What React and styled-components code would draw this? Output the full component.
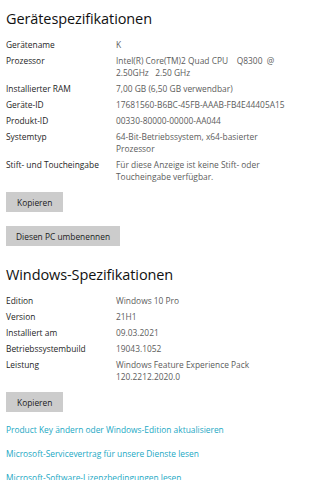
import React from "react";
import styled, { createGlobalStyle } from "styled-components";

const GlobalStyle = createGlobalStyle`
    html, body {
        margin: 0;
        padding: 0;
        background: #ffffff;
    }
    body {
        font-family: "Open Sans", "Noto Sans", sans-serif;
        color: #1b1b1b;
    }
`;

const Page = styled.div`
    width: 318px;
    height: 480px;
    overflow: hidden;
    padding: 0 6px;
    box-sizing: border-box;
`;

const Section = styled.section`
    display: flex;
    flex-direction: column;
    align-items: flex-start;
`;

const Title = styled.h2`
    margin: ${(p) => p.$top}px 0 0;
    font-size: 14.5px;
    font-weight: 400;
    line-height: 20px;
    letter-spacing: -0.1px;
    color: #111;
`;

const SpecGrid = styled.div`
    display: grid;
    grid-template-columns: 110px 1fr;
    row-gap: 4px;
    margin-top: 10px;
    width: 100%;
    font-size: 8.4px;
    line-height: 12px;
`;

const Label = styled.div`
    color: #1e1e1e;
    white-space: nowrap;
`;

const Value = styled.div`
    color: #5c5c5c;
    white-space: pre;
`;

const Button = styled.button`
    margin-top: ${(p) => p.$top}px;
    height: 20px;
    padding: 0 ${(p) => p.$pad || 11}px;
    border: none;
    background: #cccccc;
    color: #1b1b1b;
    font-family: inherit;
    font-size: 8.4px;
    cursor: pointer;
`;

const Links = styled.div`
    display: flex;
    flex-direction: column;
    gap: 12px;
    margin-top: 12px;
`;

const Link = styled.a`
    color: #22a8c4;
    font-size: 8.4px;
    line-height: 12px;
    text-decoration: none;
    white-space: nowrap;
`;

const device = [
    ["Gerätename", ["K"]],
    ["Prozessor", ["Intel(R) Core(TM)2 Quad CPU    Q8300  @", "2.50GHz   2.50 GHz"]],
    ["Installierter RAM", ["7,00 GB (6,50 GB verwendbar)"]],
    ["Geräte-ID", ["17681560-B6BC-45FB-AAAB-FB4E44405A15"]],
    ["Produkt-ID", ["00330-80000-00000-AA044"]],
    ["Systemtyp", ["64-Bit-Betriebssystem, x64-basierter", "Prozessor"]],
    ["Stift- und Toucheingabe", ["Für diese Anzeige ist keine Stift- oder", "Toucheingabe verfügbar."]],
];

const windows = [
    ["Edition", ["Windows 10 Pro"]],
    ["Version", ["21H1"]],
    ["Installiert am", ["09.03.2021"]],
    ["Betriebssystembuild", ["19043.1052"]],
    ["Leistung", ["Windows Feature Experience Pack", "120.2212.2020.0"]],
];

const Specs = ({ rows }) => (
    <SpecGrid>
        {rows.map(([label, lines]) => (
            <React.Fragment key={label}>
                <Label>{label}</Label>
                <Value>{lines.join("\n")}</Value>
            </React.Fragment>
        ))}
    </SpecGrid>
);

const App = () => {
    return (
        <Page>
            <GlobalStyle />
            <Section>
                <Title $top={9}>Gerätespezifikationen</Title>
                <Specs rows={device} />
                <Button $top={9}>Kopieren</Button>
                <Button $top={14} $pad={10}>Diesen PC umbenennen</Button>
            </Section>
            <Section>
                <Title $top={19}>Windows-Spezifikationen</Title>
                <Specs rows={windows} />
                <Button $top={9}>Kopieren</Button>
                <Links>
                    <Link href="#">Product Key ändern oder Windows-Edition aktualisieren</Link>
                    <Link href="#">Microsoft-Servicevertrag für unsere Dienste lesen</Link>
                    <Link href="#">Microsoft-Software-Lizenzbedingungen lesen</Link>
                </Links>
            </Section>
        </Page>
    );
};

export default App;
